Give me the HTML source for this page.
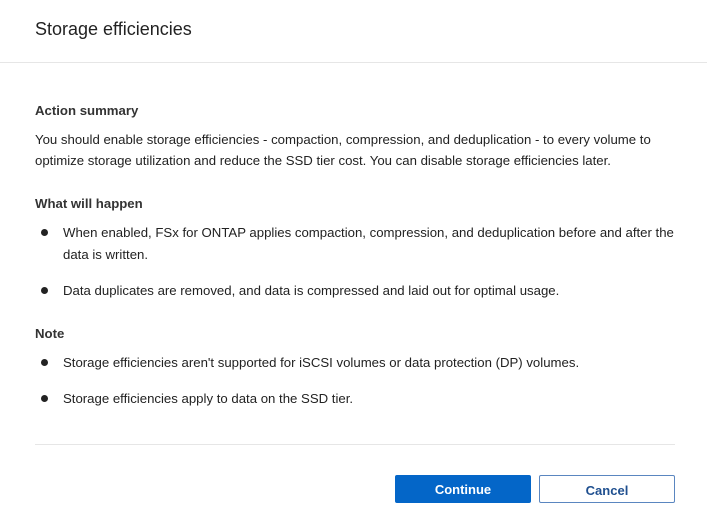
<!DOCTYPE html>
<html><head><meta charset="utf-8"><style>
body{margin:0;width:707px;height:529px;background:#fff;font-family:"Liberation Sans",sans-serif;color:#222;position:relative;overflow:hidden}
.a{position:absolute;white-space:nowrap}
.t{font-size:13.2px;line-height:16px}
.h{font-size:13.2px;font-weight:bold;color:#333}
.d{position:absolute;width:7px;height:7px;border-radius:50%;background:#222}
.btn{position:absolute;top:475px;height:28px;width:136px;box-sizing:border-box;font-size:13px;font-weight:bold;text-align:center;line-height:30px;border-radius:2px}
</style></head><body>
<div class="a" style="left:35px;top:19px;font-size:18px;color:#222">Storage efficiencies</div>
<div style="position:absolute;left:0;top:62px;width:707px;height:1px;background:#e6e6e6"></div>
<div class="a h" style="left:35px;top:103px">Action summary</div>
<div class="a t" style="left:35px;top:132px">You should enable storage efficiencies - compaction, compression, and deduplication - to every volume to</div>
<div class="a t" style="left:35px;top:153px">optimize storage utilization and reduce the SSD tier cost. You can disable storage efficiencies later.</div>
<div class="a h" style="left:35px;top:196px">What will happen</div>
<div class="d" style="left:41px;top:229px"></div>
<div class="a t" style="left:63px;top:225px">When enabled, FSx for ONTAP applies compaction, compression, and deduplication before and after the</div>
<div class="a t" style="left:63px;top:247px">data is written.</div>
<div class="d" style="left:41px;top:287px"></div>
<div class="a t" style="left:63px;top:283px">Data duplicates are removed, and data is compressed and laid out for optimal usage.</div>
<div class="a h" style="left:35px;top:326px">Note</div>
<div class="d" style="left:41px;top:359px"></div>
<div class="a t" style="left:63px;top:355px">Storage efficiencies aren't supported for iSCSI volumes or data protection (DP) volumes.</div>
<div class="d" style="left:41px;top:395px"></div>
<div class="a t" style="left:63px;top:391px">Storage efficiencies apply to data on the SSD tier.</div>
<div style="position:absolute;left:35px;top:444px;width:640px;height:1px;background:#e6e6e6"></div>
<div class="btn" style="left:395px;background:#0466c8;color:#fff">Continue</div>
<div class="btn" style="left:539px;border:1px solid #5a86c0;color:#1f4f8f;background:#fff">Cancel</div>
</body></html>
